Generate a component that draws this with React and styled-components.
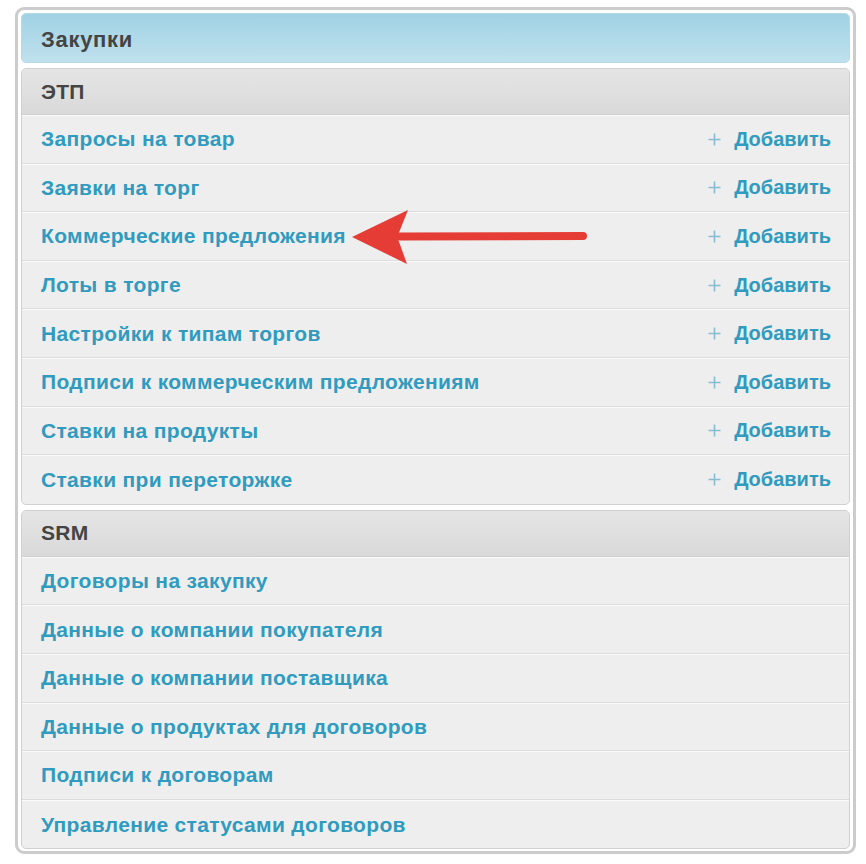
import React from 'react';
import styled, { createGlobalStyle } from 'styled-components';

const GlobalStyle = createGlobalStyle`
  html, body {
    margin: 0;
    padding: 0;
    background: #fff;
  }
  body {
    font-family: "Liberation Sans", Arial, sans-serif;
  }
`;

const Page = styled.div`
  position: relative;
  padding: 7px 0 0 15px;
`;

const Frame = styled.div`
  box-sizing: border-box;
  width: 841px;
  border: 3px solid #cccccc;
  border-radius: 9px;
  padding: 3px 3px 2px;
  background: #fff;
`;

const ModuleHeader = styled.h2`
  box-sizing: border-box;
  height: 50px;
  margin: 0 0 5px;
  padding: 4px 19px 0;
  display: flex;
  align-items: center;
  border: 1px solid #b5d9e6;
  border-radius: 5px;
  background: linear-gradient(#a0d2e4, #bfe1ed);
  color: #444;
  font-size: 22px;
  letter-spacing: 0.7px;
  font-weight: bold;
`;

const Group = styled.section`
  border: 1px solid #d0d0d0;
  border-radius: 5px;
  overflow: hidden;
  background: #eeeeee;

  & + & {
    margin-top: 5px;
  }
`;

const GroupHeader = styled.h3`
  box-sizing: border-box;
  height: ${({ $h }) => $h}px;
  margin: 0;
  padding: 0 19px;
  display: flex;
  align-items: center;
  background: linear-gradient(#e5e5e5, #d9d9d9);
  border-bottom: 1px solid #cfcfcf;
  color: #444;
  font-size: 21px;
  letter-spacing: 0.3px;
  font-weight: bold;
`;

const Row = styled.div`
  box-sizing: border-box;
  height: 48.6px;
  padding: 0 18px 0 19px;
  display: flex;
  align-items: center;
  justify-content: space-between;
  border-top: 1px solid #fbfbfb;
  border-bottom: 1px solid #dcdcdc;

  &:last-child {
    border-bottom: 0;
  }
`;

const Link = styled.a`
  color: #309bbf;
  font-size: 21px;
  letter-spacing: 0.33px;
  font-weight: bold;
  text-decoration: none;
  cursor: pointer;
`;

const AddLink = styled(Link)`
  display: flex;
  align-items: center;
  gap: 13px;
  font-size: 20px;
  letter-spacing: 0;
`;

const PlusIcon = () => (
  <svg width="13" height="13" viewBox="0 0 13 13">
    <path d="M6.5 0.5v12M0.5 6.5h12" stroke="#86bdd2" strokeWidth="1.6" />
  </svg>
);

const Arrow = styled.svg`
  position: absolute;
  left: 340px;
  top: 200px;
`;

const etp = [
  'Запросы на товар',
  'Заявки на торг',
  'Коммерческие предложения',
  'Лоты в торге',
  'Настройки к типам торгов',
  'Подписи к коммерческим предложениям',
  'Ставки на продукты',
  'Ставки при переторжке',
];

const srm = [
  'Договоры на закупку',
  'Данные о компании покупателя',
  'Данные о компании поставщика',
  'Данные о продуктах для договоров',
  'Подписи к договорам',
  'Управление статусами договоров',
];

const App = () => (
  <Page>
    <GlobalStyle />
    <Frame>
      <ModuleHeader>Закупки</ModuleHeader>

      <Group>
        <GroupHeader $h={46}>ЭТП</GroupHeader>
        {etp.map((item) => (
          <Row key={item}>
            <Link>{item}</Link>
            <AddLink>
              <PlusIcon />
              Добавить
            </AddLink>
          </Row>
        ))}
      </Group>

      <Group>
        <GroupHeader $h={46}>SRM</GroupHeader>
        {srm.map((item) => (
          <Row key={item}>
            <Link>{item}</Link>
          </Row>
        ))}
      </Group>
    </Frame>

    <Arrow width="260" height="80" viewBox="0 0 260 80">
      <path d="M60 36.5 L243 36" stroke="#e53d35" strokeWidth="8" strokeLinecap="round" />
      <path d="M12 37 L68 10 L58 35 L58 39 L67 64 Z" fill="#e53d35" />
    </Arrow>
  </Page>
);

export default App;
